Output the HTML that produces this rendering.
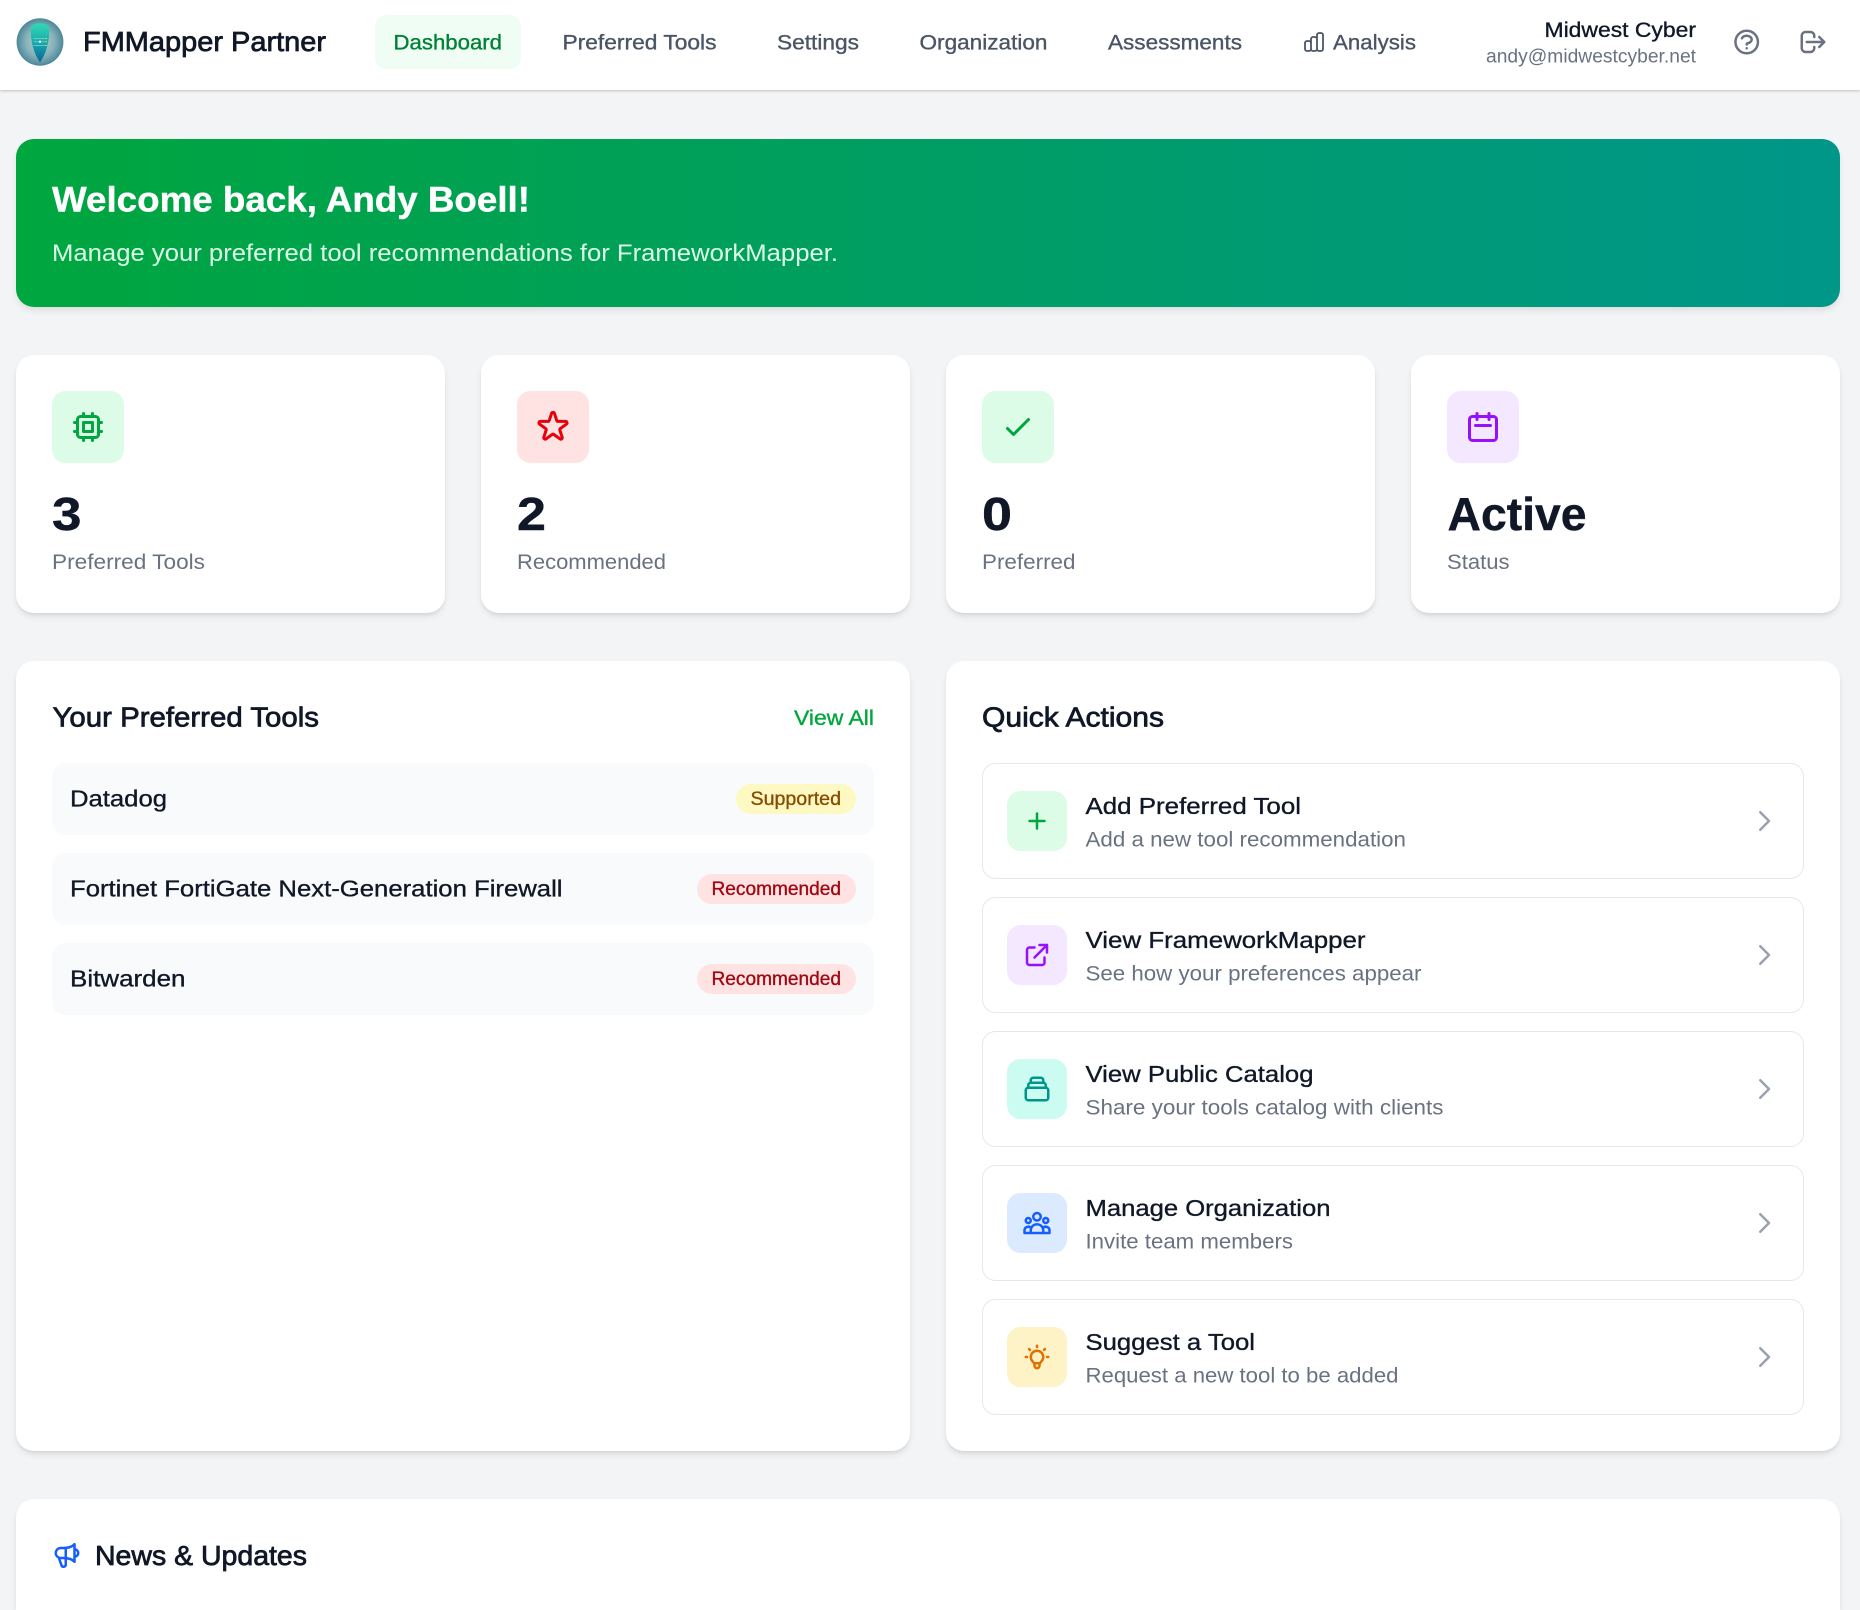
<!DOCTYPE html>
<html lang="en">
<head>
<meta charset="utf-8">
<title>FMMapper Partner</title>
<style>
html,body{margin:0;padding:0;width:1860px;height:1610px;overflow:hidden}
body{background:#f3f4f6;position:relative;font-family:"Liberation Sans",sans-serif}
.b{position:absolute;box-sizing:border-box}
.nav{left:0;top:0;width:1860px;height:90px;background:#fff;box-shadow:0 1px 3px rgba(0,0,0,.18),0 1px 2px -1px rgba(0,0,0,.1)}
.pill{left:375px;top:15px;width:146px;height:54px;background:#f0fdf4;border-radius:11px}
.hero{left:16px;top:139px;width:1824px;height:168px;border-radius:18px;background:linear-gradient(to right,#00a63e,#009689);box-shadow:0 4px 7px -1px rgba(0,0,0,.1)}
.card{background:#fff;border-radius:18px;box-shadow:0 4px 7px -1px rgba(0,0,0,.1),0 2px 4px -2px rgba(0,0,0,.1)}
.ico{width:72px;height:72px;top:391px;border-radius:13.5px}
.row{left:52px;width:822px;height:72px;background:#f9fafb;border-radius:13.5px}
.badge{height:30px;border-radius:15px}
.act{left:982px;width:822px;height:116px;background:#fff;border:1.2px solid #e5e7eb;border-radius:13.5px}
.ai{left:1007px;width:60px;height:60px;border-radius:13.5px}
svg.top{position:absolute;left:0;top:0}
text{font-family:"Liberation Sans",sans-serif;white-space:pre}
.m{stroke-width:.35}
.s{stroke-width:.75}
.bd{stroke-width:.4}
.k{fill:#101828;stroke:#101828}
.g7{fill:#4a5565;stroke:#4a5565}
.g5{fill:#6a7282;stroke:none}
.ic{fill:none;stroke-width:2;stroke-linecap:round;stroke-linejoin:round}
</style>
</head>
<body>
<div class="b nav"></div>
<div class="b pill"></div>
<div class="b hero"></div>

<div class="b card" style="left:16px;top:355px;width:429px;height:258px"></div>
<div class="b card" style="left:481px;top:355px;width:429px;height:258px"></div>
<div class="b card" style="left:946px;top:355px;width:429px;height:258px"></div>
<div class="b card" style="left:1411px;top:355px;width:429px;height:258px"></div>
<div class="b ico" style="left:52px;background:#dcfce7"></div>
<div class="b ico" style="left:517px;background:#ffe2e2"></div>
<div class="b ico" style="left:982px;background:#dcfce7"></div>
<div class="b ico" style="left:1447px;background:#f3e8ff"></div>

<div class="b card" style="left:16px;top:661px;width:894px;height:790px"></div>
<div class="b card" style="left:946px;top:661px;width:894px;height:790px"></div>
<div class="b card" style="left:16px;top:1499px;width:1824px;height:111px;border-radius:18px 18px 0 0"></div>

<div class="b row" style="top:763px"></div>
<div class="b row" style="top:853px"></div>
<div class="b row" style="top:943px"></div>
<div class="b badge" style="left:736px;top:784px;width:120px;background:#fef9c2"></div>
<div class="b badge" style="left:697px;top:874px;width:159px;background:#ffe2e2"></div>
<div class="b badge" style="left:697px;top:964px;width:159px;background:#ffe2e2"></div>

<div class="b act" style="top:763px"></div>
<div class="b act" style="top:897px"></div>
<div class="b act" style="top:1031px"></div>
<div class="b act" style="top:1165px"></div>
<div class="b act" style="top:1299px"></div>
<div class="b ai" style="top:791px;background:#dcfce7"></div>
<div class="b ai" style="top:925px;background:#f3e8ff"></div>
<div class="b ai" style="top:1059px;background:#cbfbf1"></div>
<div class="b ai" style="top:1193px;background:#dbeafe"></div>
<div class="b ai" style="top:1327px;background:#fef3c6"></div>

<svg class="top" width="1860" height="1610" viewBox="0 0 1860 1610" xmlns="http://www.w3.org/2000/svg">
<defs>
<radialGradient id="lg" cx="50%" cy="50%" r="50%"><stop offset="0" stop-color="#b4d0d3"/><stop offset=".6" stop-color="#88b3ba"/><stop offset="1" stop-color="#4d8799"/></radialGradient>
<linearGradient id="sh" x1="0" y1="0" x2="0" y2="1"><stop offset="0" stop-color="#33d9b2"/><stop offset=".55" stop-color="#15a3ae"/><stop offset="1" stop-color="#0c6590"/></linearGradient>
</defs>

<!-- logo -->
<ellipse cx="40" cy="42" rx="23.4" ry="23.7" fill="url(#lg)"/>
<path d="M30.700 30C30.700 25 34 23.300 40 23.300S49.300 25 49.300 30C49.300 42 46 54 40 62.300 34 54 30.700 42 30.700 30z" fill="url(#sh)"/>
<path d="M33.500 38.500h11M33.500 41.800h11M33.500 45.500h11" stroke="#7fd8d0" stroke-width="1" opacity=".75"/>
<path d="M45 38.500h2M45 41.800h2M45 45.500h2" stroke="#e6c75a" stroke-width="1"/>
<rect x="39" y="40.700" width="2" height="2" fill="#fff"/>

<!-- header text -->
<text class="s k" x="83" y="51" font-size="28" textLength="243" lengthAdjust="spacingAndGlyphs">FMMapper Partner</text>
<text class="m" x="393.500" y="49.500" font-size="21" fill="#008236" stroke="#008236" textLength="108.500" lengthAdjust="spacingAndGlyphs">Dashboard</text>
<text class="m g7" x="562.500" y="49.500" font-size="21" textLength="154" lengthAdjust="spacingAndGlyphs">Preferred Tools</text>
<text class="m g7" x="777" y="49.500" font-size="21" textLength="82" lengthAdjust="spacingAndGlyphs">Settings</text>
<text class="m g7" x="919.500" y="49.500" font-size="21" textLength="128" lengthAdjust="spacingAndGlyphs">Organization</text>
<text class="m g7" x="1108" y="49.500" font-size="21" textLength="134" lengthAdjust="spacingAndGlyphs">Assessments</text>
<text class="m g7" x="1333" y="49.500" font-size="21" textLength="83" lengthAdjust="spacingAndGlyphs">Analysis</text>
<text class="m k" x="1544.500" y="37" font-size="21" textLength="151.500" lengthAdjust="spacingAndGlyphs">Midwest Cyber</text>
<text class="g5" x="1486" y="62.300" font-size="19" textLength="210" lengthAdjust="spacingAndGlyphs">andy@midwestcyber.net</text>

<!-- header icons -->
<g class="ic" stroke="#4a5565" transform="translate(1302 30)" style="stroke-width:1.800"><path d="M9 19v-6a2 2 0 00-2-2H5a2 2 0 00-2 2v6a2 2 0 002 2h2a2 2 0 002-2zm0 0V9a2 2 0 012-2h2a2 2 0 012 2v10m-6 0a2 2 0 002 2h2a2 2 0 002-2m0 0V5a2 2 0 012-2h2a2 2 0 012 2v14a2 2 0 01-2 2h-2a2 2 0 01-2-2z"/></g>
<g class="ic" stroke="#6a7282" transform="translate(1731.700 27) scale(1.250)"><path d="M8.228 9c.549-1.165 2.03-2 3.772-2 2.21 0 4 1.343 4 3 0 1.400-1.278 2.575-3.006 2.907-.542.104-.994.54-.994 1.093m0 3h.01M21 12a9 9 0 11-18 0 9 9 0 0118 0z"/></g>
<g class="ic" stroke="#6a7282" transform="translate(1798 27) scale(1.250)"><path d="M17 16l4-4m0 0l-4-4m4 4H7m6 4v1a3 3 0 01-3 3H6a3 3 0 01-3-3V7a3 3 0 013-3h4a3 3 0 013 3v1"/></g>

<!-- hero -->
<text class="bd" font-weight="700" fill="#fff" stroke="#fff" x="52" y="211.700" font-size="35" textLength="478" lengthAdjust="spacingAndGlyphs">Welcome back, Andy Boell!</text>
<text fill="#dcfce7" x="52" y="261" font-size="23.800" textLength="786" lengthAdjust="spacingAndGlyphs">Manage your preferred tool recommendations for FrameworkMapper.</text>

<!-- stat icons -->
<g class="ic" stroke="#00a63e" transform="translate(70 409) scale(1.500)"><path d="M9 3v2m6-2v2M9 19v2m6-2v2M5 9H3m2 6H3m18-6h-2m2 6h-2M7 19h10a2 2 0 002-2V7a2 2 0 00-2-2H7a2 2 0 00-2 2v10a2 2 0 002 2zM9 9h6v6H9V9z"/></g>
<g class="ic" stroke="#e7000b" transform="translate(535 409) scale(1.500)"><path d="M11.049 2.927c.3-.921 1.603-.921 1.902 0l1.519 4.674a1 1 0 00.95.69h4.915c.969 0 1.371 1.240.588 1.810l-3.976 2.888a1 1 0 00-.363 1.118l1.518 4.674c.3.922-.755 1.688-1.538 1.118l-3.976-2.888a1 1 0 00-1.176 0l-3.976 2.888c-.783.57-1.838-.197-1.538-1.118l1.518-4.674a1 1 0 00-.363-1.118l-3.976-2.888c-.784-.57-.38-1.810.588-1.810h4.914a1 1 0 00.951-.69l1.519-4.674z"/></g>
<g class="ic" stroke="#00a63e" transform="translate(1000 409) scale(1.500)"><path d="M5 13l4 4L19 7"/></g>
<g class="ic" stroke="#9810fa" transform="translate(1465 409) scale(1.500)"><path d="M8 7V3m8 4V3m-9 8h10M5 21h14a2 2 0 002-2V7a2 2 0 00-2-2H5a2 2 0 00-2 2v12a2 2 0 002 2z"/></g>

<!-- stats -->
<text class="bd" font-weight="700" fill="#101828" stroke="#101828" x="52" y="530" font-size="46" textLength="29.500" lengthAdjust="spacingAndGlyphs">3</text>
<text class="bd" font-weight="700" fill="#101828" stroke="#101828" x="517" y="530" font-size="46" textLength="29" lengthAdjust="spacingAndGlyphs">2</text>
<text class="bd" font-weight="700" fill="#101828" stroke="#101828" x="982" y="530" font-size="46" textLength="30" lengthAdjust="spacingAndGlyphs">0</text>
<text class="bd" font-weight="700" fill="#101828" stroke="#101828" x="1447.500" y="530" font-size="46" textLength="139" lengthAdjust="spacingAndGlyphs">Active</text>
<text class="g5" x="52" y="568.800" font-size="21" textLength="153" lengthAdjust="spacingAndGlyphs">Preferred Tools</text>
<text class="g5" x="517" y="568.800" font-size="21" textLength="149" lengthAdjust="spacingAndGlyphs">Recommended</text>
<text class="g5" x="982" y="568.800" font-size="21" textLength="93.500" lengthAdjust="spacingAndGlyphs">Preferred</text>
<text class="g5" x="1447" y="568.800" font-size="21" textLength="62.500" lengthAdjust="spacingAndGlyphs">Status</text>

<!-- left panel -->
<text class="s k" x="52.500" y="726.700" font-size="28" textLength="266.500" lengthAdjust="spacingAndGlyphs">Your Preferred Tools</text>
<text class="m" fill="#00a63e" stroke="#00a63e" x="794" y="725" font-size="21" textLength="80" lengthAdjust="spacingAndGlyphs">View All</text>
<text class="m k" x="70" y="806.700" font-size="23.500" textLength="97" lengthAdjust="spacingAndGlyphs">Datadog</text>
<text class="m k" x="70" y="896.700" font-size="23.500" textLength="492.500" lengthAdjust="spacingAndGlyphs">Fortinet FortiGate Next-Generation Firewall</text>
<text class="m k" x="70" y="986.700" font-size="23.500" textLength="115.500" lengthAdjust="spacingAndGlyphs">Bitwarden</text>
<text class="m" fill="#894b00" stroke="#894b00" x="750.500" y="805" font-size="19" textLength="90.500" lengthAdjust="spacingAndGlyphs">Supported</text>
<text class="m" fill="#9f0712" stroke="#9f0712" x="711.500" y="895" font-size="19" textLength="129.500" lengthAdjust="spacingAndGlyphs">Recommended</text>
<text class="m" fill="#9f0712" stroke="#9f0712" x="711.500" y="985" font-size="19" textLength="129.500" lengthAdjust="spacingAndGlyphs">Recommended</text>

<!-- right panel -->
<text class="s k" x="982" y="726.700" font-size="28" textLength="182" lengthAdjust="spacingAndGlyphs">Quick Actions</text>

<text class="m k" x="1085.500" y="814" font-size="23.500" textLength="215.500" lengthAdjust="spacingAndGlyphs">Add Preferred Tool</text>
<text class="g5" x="1085.500" y="846.400" font-size="21" textLength="320.500" lengthAdjust="spacingAndGlyphs">Add a new tool recommendation</text>
<text class="m k" x="1085.500" y="948" font-size="23.500" textLength="280" lengthAdjust="spacingAndGlyphs">View FrameworkMapper</text>
<text class="g5" x="1085.500" y="980.400" font-size="21" textLength="336" lengthAdjust="spacingAndGlyphs">See how your preferences appear</text>
<text class="m k" x="1085.500" y="1082" font-size="23.500" textLength="228" lengthAdjust="spacingAndGlyphs">View Public Catalog</text>
<text class="g5" x="1085.500" y="1114.400" font-size="21" textLength="358" lengthAdjust="spacingAndGlyphs">Share your tools catalog with clients</text>
<text class="m k" x="1085.500" y="1216" font-size="23.500" textLength="245" lengthAdjust="spacingAndGlyphs">Manage Organization</text>
<text class="g5" x="1085.500" y="1248.400" font-size="21" textLength="207.500" lengthAdjust="spacingAndGlyphs">Invite team members</text>
<text class="m k" x="1085.500" y="1350" font-size="23.500" textLength="169.500" lengthAdjust="spacingAndGlyphs">Suggest a Tool</text>
<text class="g5" x="1085.500" y="1382.400" font-size="21" textLength="313" lengthAdjust="spacingAndGlyphs">Request a new tool to be added</text>

<!-- action icons -->
<g class="ic" stroke="#00a63e" transform="translate(1022 806) scale(1.250)"><path d="M12 6v6m0 0v6m0-6h6m-6 0H6"/></g>
<g class="ic" stroke="#9810fa" transform="translate(1022 940) scale(1.250)"><path d="M10 6H6a2 2 0 00-2 2v10a2 2 0 002 2h10a2 2 0 002-2v-4M14 4h6m0 0v6m0-6L10 14"/></g>
<g class="ic" stroke="#009689" transform="translate(1022 1074) scale(1.250)"><path d="M19 11H5m14 0a2 2 0 012 2v6a2 2 0 01-2 2H5a2 2 0 01-2-2v-6a2 2 0 012-2m14 0V9a2 2 0 00-2-2M5 11V9a2 2 0 012-2m0 0V5a2 2 0 012-2h6a2 2 0 012 2v2M7 7h10"/></g>
<g class="ic" stroke="#155dfc" transform="translate(1022 1208) scale(1.250)"><path d="M17 20h5v-2a3 3 0 00-5.356-1.857M17 20H7m10 0v-2c0-.656-.126-1.283-.356-1.857M7 20H2v-2a3 3 0 015.356-1.857M7 20v-2c0-.656.126-1.283.356-1.857m0 0a5.002 5.002 0 019.288 0M15 7a3 3 0 11-6 0 3 3 0 016 0zm6 3a2 2 0 11-4 0 2 2 0 014 0zM7 10a2 2 0 11-4 0 2 2 0 014 0z"/></g>
<g class="ic" stroke="#e17100" transform="translate(1022 1342) scale(1.250)"><path d="M9.663 17h4.673M12 3v1m6.364 1.636l-.707.707M21 12h-1M4 12H3m3.343-5.657l-.707-.707m2.828 9.900a5 5 0 117.072 0l-.548.547A3.374 3.374 0 0014 18.469V19a2 2 0 11-4 0v-.531c0-.895-.356-1.754-.988-2.386l-.548-.547z"/></g>

<!-- chevrons -->
<g class="ic" stroke="#99a1af">
<path transform="translate(1749 806) scale(1.250)" d="M9 5l7 7-7 7"/>
<path transform="translate(1749 940) scale(1.250)" d="M9 5l7 7-7 7"/>
<path transform="translate(1749 1074) scale(1.250)" d="M9 5l7 7-7 7"/>
<path transform="translate(1749 1208) scale(1.250)" d="M9 5l7 7-7 7"/>
<path transform="translate(1749 1342) scale(1.250)" d="M9 5l7 7-7 7"/>
</g>

<!-- news -->
<g class="ic" stroke="#155dfc" transform="translate(52 1540.500) scale(1.250)"><path d="M11 5.882V19.240a1.760 1.760 0 01-3.417.592l-2.147-6.150M18 13a3 3 0 100-6M5.436 13.683A4.001 4.001 0 017 6h1.832c4.100 0 7.625-1.234 9.168-3v14c-1.543-1.766-5.067-3-9.168-3H7a3.988 3.988 0 01-1.564-.317z"/></g>
<text class="s k" x="95" y="1565" font-size="28" textLength="212" lengthAdjust="spacingAndGlyphs">News &amp; Updates</text>
</svg>
</body>
</html>
